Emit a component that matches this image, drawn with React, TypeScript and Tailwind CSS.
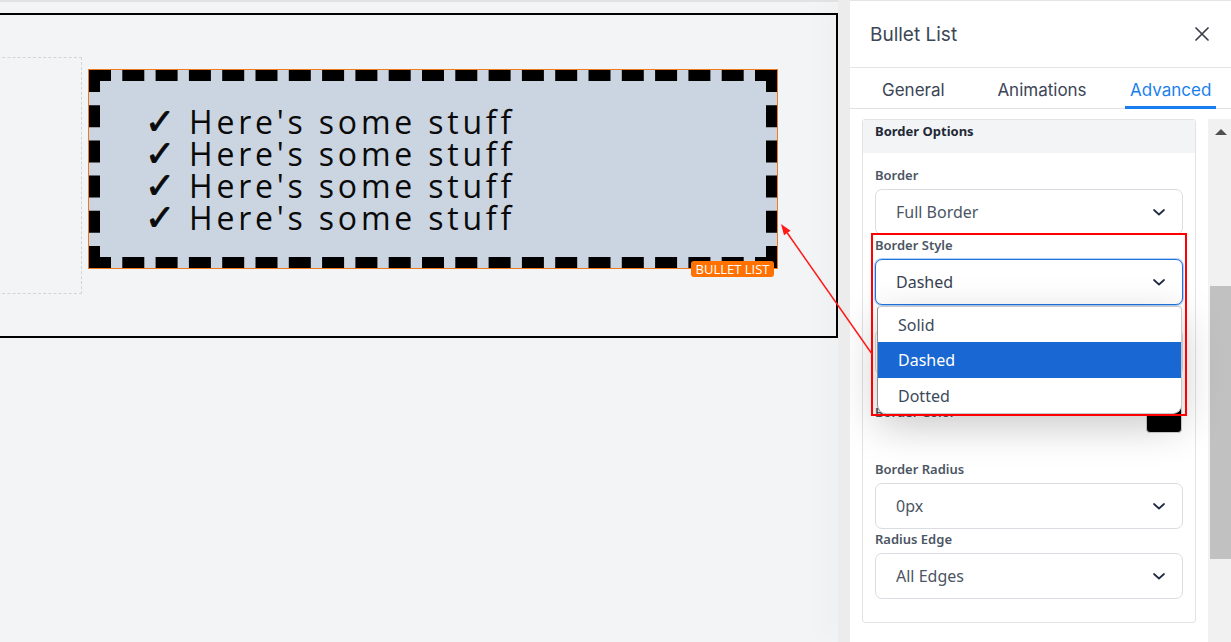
import React from "react";

function Chevron() {
  return (
    <svg width="12" height="7" viewBox="0 0 12 7" fill="none">
      <polyline points="1,1 6,5.5 11,1" stroke="#1f2a44" strokeWidth="1.7" strokeLinecap="round" strokeLinejoin="round" />
    </svg>
  );
}

function Label({ children, className = "" }: { children: React.ReactNode; className?: string }) {
  return (
    <div className={`h-[16px] text-[13px] font-semibold leading-[16px] text-[#4b5563] ${className}`}>{children}</div>
  );
}

function Select({ value }: { value: string }) {
  return (
    <div className="mt-[6px] flex h-[46px] items-center justify-between rounded-[7px] border border-[#d9dce1] bg-white pl-[20px] pr-[17px] text-[16px] text-[#4b5563]">
      <span>{value}</span>
      <Chevron />
    </div>
  );
}

export default function App() {
  const lines = [0, 1, 2, 3];
  return (
    <div className="relative flex h-[642px] w-[1231px] overflow-hidden bg-[#f3f4f6] font-['Noto_Sans',sans-serif]">
      {/* Canvas */}
      <div className="flex w-[838px] shrink-0 flex-col">
        <div className="h-[2px] bg-[#e2e2e2]" />
        <div className="ml-[-10px] mt-[11px] h-[325px] w-[848px] border-2 border-black">
          <div className="flex items-start pt-[42px]">
            <div className="h-[237px] w-[90px] shrink-0 border border-l-0 border-dashed border-[#d4d4d8]" />
            <div className="relative ml-[6px] mt-[12px] h-[200px] w-[690px] shrink-0 border border-[#ef7a1e]">
              <div className="h-full w-full border-[11px] border-dashed border-black bg-[#cbd5e1] pl-[45px] pt-[25px] font-['Open_Sans',sans-serif] text-[32px] leading-[32px] tracking-[3.8px] text-[#0a0a0a]">
                {lines.map((i) => (
                  <div key={i} className="flex h-[32px] items-baseline whitespace-nowrap">
                    <span className="w-[44px] shrink-0 font-['DejaVu_Sans',sans-serif] text-[36px] leading-[32px] tracking-normal [-webkit-text-stroke:0.9px_#0a0a0a]">✓</span>
                    <span className="leading-[32px]">Here's some stuff</span>
                  </div>
                ))}
              </div>
              <span className="absolute bottom-[-9px] right-[3px] flex h-[16px] w-[83px] items-center justify-center rounded-[3px] bg-[#ff7100] font-['Open_Sans',sans-serif] text-[13px] leading-[16px] text-white">
                BULLET LIST
              </span>
            </div>
          </div>
        </div>
      </div>

      {/* Gutter */}
      <div className="w-[12px] shrink-0 bg-[#ececec] shadow-[-10px_0_28px_rgba(0,0,0,0.04)]" />

      {/* Panel */}
      <div className="flex w-[381px] shrink-0 flex-col overflow-hidden border-t border-[#e5e5e5] bg-white">
        <div className="flex h-[67px] shrink-0 items-center justify-between border-b border-[#e2e4e8] pl-[20px] pr-[22px]">
          <span className="pt-[2px] font-['Inter',sans-serif] text-[19px] text-[#3b4757]">Bullet List</span>
          <svg width="14" height="14" viewBox="0 0 14 14" fill="none">
            <path d="M1 1 L13 13 M13 1 L1 13" stroke="#3a3f47" strokeWidth="1.7" strokeLinecap="round" />
          </svg>
        </div>
        <div className="relative ml-[-1px] grid h-[41px] w-[386px] shrink-0 grid-cols-3 border-b border-[#e2e2e2] font-['Inter',sans-serif] text-[17px]">
          <div className="flex items-center justify-center pt-[6px] text-[#3b4555]">General</div>
          <div className="flex items-center justify-center pt-[6px] text-[#3b4555]">Animations</div>
          <div className="flex items-center justify-center">
            <span className="relative flex h-full items-center px-[5px] pt-[6px] text-[#1a7fee]">
              Advanced
              <span className="absolute bottom-[-1px] left-0 right-0 h-[3px] bg-[#1a7fee]" />
            </span>
          </div>
        </div>

        <div className="flex min-h-0 flex-1">
          <div className="min-w-0 flex-1 px-[12px] pt-[10px]">
            <div className="rounded-[3px] border border-[#e3e3e3] bg-white">
              <div className="h-[33px] bg-[#f3f4f6] px-[12px] pt-[2px] text-[13px] font-bold leading-[18px] text-[#1f2937]">
                Border Options
              </div>
              <div className="px-[12px] pb-[23px] pt-[14px]">
                <Label>Border</Label>
                <Select value="Full Border" />

                <div className="mt-[2px]">
                  <Label>Border Style</Label>
                  <div className="relative">
                    <div className="mt-[6px] flex h-[46px] items-center justify-between rounded-[7px] border-[1.5px] border-[#1f74e0] bg-white pl-[20px] pr-[17px] text-[16px] text-[#374151] shadow-[0_0_0_1px_rgba(31,116,224,0.35)]">
                      <span>Dashed</span>
                      <Chevron />
                    </div>
                    <div className="absolute left-[2px] top-[47px] z-10 w-[305px] overflow-hidden rounded-b-[9px] rounded-t-[4px] border border-[#c9c9c9] border-l-[#8d8d8d] bg-white text-[16px] shadow-[0_12px_40px_rgba(0,0,0,0.22)]">
                      <div className="flex h-[35px] items-center pl-[20px] text-[#3b4a5c]">Solid</div>
                      <div className="flex h-[36px] items-center bg-[#1967d2] pl-[20px] text-white">Dashed</div>
                      <div className="flex h-[35px] items-center pl-[20px] text-[#3b4a5c]">Dotted</div>
                    </div>
                  </div>
                </div>

                <div className="mt-[2px]">
                  <Label className="invisible">Border Width</Label>
                  <Select value="2px" />
                </div>

                <div className="mt-[22px] flex h-[36px] items-center justify-between pr-[1px]">
                  <Label className="mb-[6px]">Border Color</Label>
                  <div className="h-[36px] w-[36px] rounded-[4px] border border-[#cfcfcf] bg-black" />
                </div>

                <div className="mt-[28px]">
                  <Label>Border Radius</Label>
                  <Select value="0px" />
                </div>
                <div className="mt-[2px]">
                  <Label>Radius Edge</Label>
                  <Select value="All Edges" />
                </div>
              </div>
            </div>
          </div>
          <div className="mt-[10px] flex w-[23px] shrink-0 flex-col bg-[#f1f1f1]">
            <div className="flex justify-center pl-[2px] pt-[10px]">
              <svg width="12" height="6" viewBox="0 0 12 6">
                <polygon points="6,0 12,6 0,6" fill="#505050" />
              </svg>
            </div>
            <div className="ml-[2px] mt-[151px] h-[273px] w-[21px] bg-[#c1c1c1]" />
          </div>
        </div>
      </div>

      {/* Annotations */}
      <div className="pointer-events-none absolute left-[871px] top-[233px] z-20 h-[183px] w-[316px] border-2 border-[#ff0000]" />
      <svg className="pointer-events-none absolute left-0 top-0 z-20" width="1231" height="642">
        <line x1="872" y1="354" x2="787.3" y2="233" stroke="#ff1a1a" strokeWidth="1.5" />
        <polygon points="781,224 790.6,230.7 784,235.3" fill="#ff1a1a" />
      </svg>
    </div>
  );
}
